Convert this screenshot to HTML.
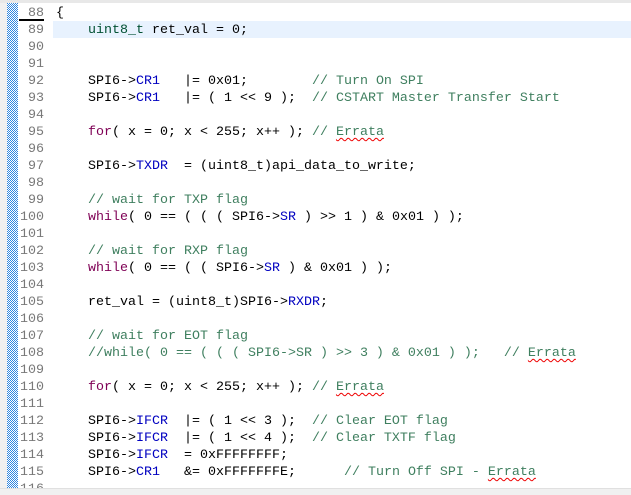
<!DOCTYPE html><html><head><style>
body{margin:0;width:631px;height:494px;overflow:hidden;background:#fff;font-family:"Liberation Mono",monospace;font-size:13.33px;position:relative}
.l{position:absolute;left:0;height:17px;line-height:19px;width:631px;white-space:pre}
.n{position:absolute;left:18px;width:26px;text-align:right;color:#787878}
.c{position:absolute;left:56px;color:#000}
.k{color:#7f0055}.f{color:#0000c0}.m{color:#3f7f5f}.t{color:#005032}
.e{text-decoration:underline wavy #e00;text-decoration-thickness:1px;text-underline-offset:2px}
</style></head><body>
<div style="position:absolute;left:0;top:0;width:631px;height:3px;background:#e8e8e8"></div>
<div style="position:absolute;left:0;top:3px;width:7px;height:485px;background:#f0f0f0"></div>
<svg style="position:absolute;left:7px;top:3px" width="11" height="485"><defs><pattern id="p" width="2" height="2" patternUnits="userSpaceOnUse"><rect width="2" height="2" fill="#fff"/><rect width="1" height="1" fill="#2f86e0"/><rect x="1" y="1" width="1" height="1" fill="#2f86e0"/></pattern></defs><rect width="11" height="485" fill="url(#p)"/></svg>
<div style="position:absolute;left:53px;top:21px;width:578px;height:17px;background:#e8f2fe"></div>
<div style="position:absolute;left:19px;top:19px;width:25px;height:2px;background:#000"></div>
<div style="position:absolute;left:0;top:488px;width:631px;height:6px;background:#f0f0f0;border-top:1px solid #e0e0e0"></div>
<div class="l" style="top:4px"><span class="n">88</span><span class="c">{</span></div>
<div class="l" style="top:21px"><span class="n">89</span><span class="c">    <span class="t">uint8_t</span> ret_val = 0;</span></div>
<div class="l" style="top:38px"><span class="n">90</span></div>
<div class="l" style="top:55px"><span class="n">91</span></div>
<div class="l" style="top:72px"><span class="n">92</span><span class="c">    SPI6-&gt;<span class="f">CR1</span>   |= 0x01;        <span class="m">// Turn On SPI</span></span></div>
<div class="l" style="top:89px"><span class="n">93</span><span class="c">    SPI6-&gt;<span class="f">CR1</span>   |= ( 1 &lt;&lt; 9 );  <span class="m">// CSTART Master Transfer Start</span></span></div>
<div class="l" style="top:106px"><span class="n">94</span></div>
<div class="l" style="top:123px"><span class="n">95</span><span class="c">    <span class="k">for</span>( x = 0; x &lt; 255; x++ ); <span class="m">// <span class="e">Errata</span></span></span></div>
<div class="l" style="top:140px"><span class="n">96</span></div>
<div class="l" style="top:157px"><span class="n">97</span><span class="c">    SPI6-&gt;<span class="f">TXDR</span>  = (uint8_t)api_data_to_write;</span></div>
<div class="l" style="top:174px"><span class="n">98</span></div>
<div class="l" style="top:191px"><span class="n">99</span><span class="c">    <span class="m">// wait for TXP flag</span></span></div>
<div class="l" style="top:208px"><span class="n">100</span><span class="c">    <span class="k">while</span>( 0 == ( ( ( SPI6-&gt;<span class="f">SR</span> ) &gt;&gt; 1 ) &amp; 0x01 ) );</span></div>
<div class="l" style="top:225px"><span class="n">101</span></div>
<div class="l" style="top:242px"><span class="n">102</span><span class="c">    <span class="m">// wait for RXP flag</span></span></div>
<div class="l" style="top:259px"><span class="n">103</span><span class="c">    <span class="k">while</span>( 0 == ( ( SPI6-&gt;<span class="f">SR</span> ) &amp; 0x01 ) );</span></div>
<div class="l" style="top:276px"><span class="n">104</span></div>
<div class="l" style="top:293px"><span class="n">105</span><span class="c">    ret_val = (uint8_t)SPI6-&gt;<span class="f">RXDR</span>;</span></div>
<div class="l" style="top:310px"><span class="n">106</span></div>
<div class="l" style="top:327px"><span class="n">107</span><span class="c">    <span class="m">// wait for EOT flag</span></span></div>
<div class="l" style="top:344px"><span class="n">108</span><span class="c">    <span class="m">//while( 0 == ( ( ( SPI6-&gt;SR ) &gt;&gt; 3 ) &amp; 0x01 ) );   // <span class="e">Errata</span></span></span></div>
<div class="l" style="top:361px"><span class="n">109</span></div>
<div class="l" style="top:378px"><span class="n">110</span><span class="c">    <span class="k">for</span>( x = 0; x &lt; 255; x++ ); <span class="m">// <span class="e">Errata</span></span></span></div>
<div class="l" style="top:395px"><span class="n">111</span></div>
<div class="l" style="top:412px"><span class="n">112</span><span class="c">    SPI6-&gt;<span class="f">IFCR</span>  |= ( 1 &lt;&lt; 3 );  <span class="m">// Clear EOT flag</span></span></div>
<div class="l" style="top:429px"><span class="n">113</span><span class="c">    SPI6-&gt;<span class="f">IFCR</span>  |= ( 1 &lt;&lt; 4 );  <span class="m">// Clear TXTF flag</span></span></div>
<div class="l" style="top:446px"><span class="n">114</span><span class="c">    SPI6-&gt;<span class="f">IFCR</span>  = 0xFFFFFFFF;</span></div>
<div class="l" style="top:463px"><span class="n">115</span><span class="c">    SPI6-&gt;<span class="f">CR1</span>   &amp;= 0xFFFFFFFE;      <span class="m">// Turn Off SPI - <span class="e">Errata</span></span></span></div>
<div class="l" style="top:480px;height:8px;overflow:hidden"><span class="n">116</span></div>
</body></html>
